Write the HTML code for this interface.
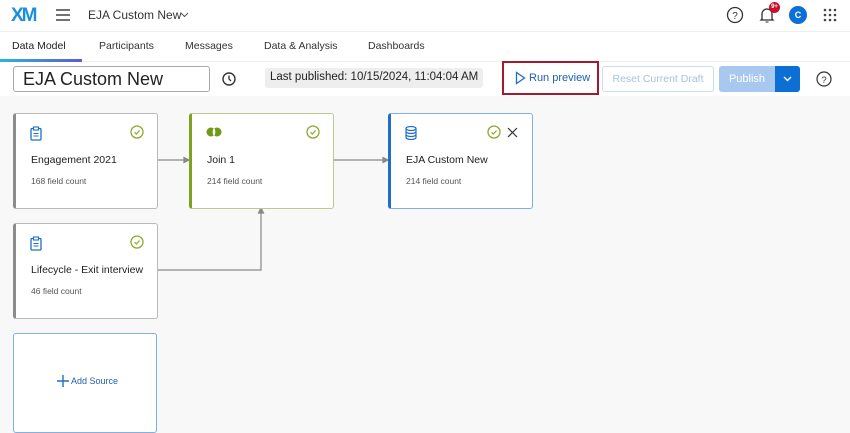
<!DOCTYPE html><html><head><style>
*{box-sizing:border-box;margin:0;padding:0}
body{width:850px;height:427px;overflow:hidden;font-family:"Liberation Sans",sans-serif;background:#f8f8f8;position:relative;color:#222}
.a{position:absolute;white-space:nowrap}
.hdr{left:0;top:0;width:850px;height:96px;background:#fff}
.card{position:absolute;width:145px;height:96px;background:#fff;border:1px solid #b9b9b9;border-left:3px solid #8c8c8c;border-radius:3px}
.card .t{position:absolute;left:15px;top:40px;font-size:10.5px;color:#222;white-space:nowrap}
.card .c{position:absolute;left:15px;top:62px;font-size:8.5px;color:#555}
.card .ic{position:absolute;left:14px;top:12px}
.card .ok{position:absolute;right:13px;top:11px}
</style></head><body>
<div class="a hdr"></div>
<div class="a" style="left:0;top:31px;width:850px;height:1px;background:#eee"></div>
<div class="a" style="left:0;top:61px;width:850px;height:1px;background:#eee"></div>
<div class="a" style="left:11px;top:5px;font-size:19px;font-weight:bold;letter-spacing:-2px;color:#1a8fe0">XM</div>
<svg class="a" style="left:55px;top:8px" width="16" height="14"><path d="M1 2h14M1 7h14M1 12h14" stroke="#444" stroke-width="1.6"/></svg>
<div class="a" style="left:88px;top:8px;font-size:12px;color:#333">EJA Custom New</div>
<svg class="a" style="left:180px;top:12px" width="9" height="6"><path d="M1 1l3.5 3.5L8 1" stroke="#555" fill="none"/></svg>
<svg class="a" style="left:726px;top:6px" width="18" height="18"><circle cx="9" cy="9" r="7.5" stroke="#333" stroke-width="1.3" fill="none"/><text x="9" y="13" font-size="10" text-anchor="middle" fill="#333" font-family="Liberation Sans">?</text></svg>
<svg class="a" style="left:758px;top:6px" width="18" height="18"><path d="M4 13V8a5 5 0 0110 0v5l1 1H3z" stroke="#333" stroke-width="1.3" fill="none"/><path d="M7.5 16h3" stroke="#333"/></svg>
<div class="a" style="left:769px;top:2px;width:11px;height:11px;border-radius:50%;background:#c8102e;color:#fff;font-size:6px;text-align:center;line-height:11px;font-weight:bold">9+</div>
<div class="a" style="left:789px;top:6px;width:18px;height:18px;border-radius:50%;background:#0b6fd4;color:#fff;font-size:9px;text-align:center;line-height:18px;font-weight:bold">C</div>
<svg class="a" style="left:823px;top:8px" width="14" height="14" fill="#444"><circle cx="2" cy="2" r="1.3"/><circle cx="7" cy="2" r="1.3"/><circle cx="12" cy="2" r="1.3"/><circle cx="2" cy="7" r="1.3"/><circle cx="7" cy="7" r="1.3"/><circle cx="12" cy="7" r="1.3"/><circle cx="2" cy="12" r="1.3"/><circle cx="7" cy="12" r="1.3"/><circle cx="12" cy="12" r="1.3"/></svg>
<div class="a" style="top:40px;left:12px;font-size:10.5px;color:#222">Data Model</div>
<div class="a" style="top:40px;left:99px;font-size:10.5px;color:#333">Participants</div>
<div class="a" style="top:40px;left:185px;font-size:10.5px;color:#333">Messages</div>
<div class="a" style="top:40px;left:264px;font-size:10.5px;color:#333">Data &amp; Analysis</div>
<div class="a" style="top:40px;left:368px;font-size:10.5px;color:#333">Dashboards</div>
<div class="a" style="left:0;top:59px;width:82px;height:3px;background:linear-gradient(90deg,#2bb5d8,#5f5ad8)"></div>
<div class="a" style="left:13px;top:66px;width:197px;height:26px;border:1px solid #aaa;border-radius:3px;background:#fff;font-size:18px;padding:2px 9px;color:#222">EJA Custom New</div>
<svg class="a" style="left:221px;top:71px" width="16" height="16"><circle cx="8" cy="8" r="6" stroke="#333" stroke-width="1.4" fill="none"/><path d="M8 4.5V8l2 2" stroke="#333" stroke-width="1.3" fill="none"/></svg>
<div class="a" style="left:265px;top:68px;width:218px;height:20px;background:#eee;border-radius:3px;font-size:11.5px;padding:3px 5px;color:#222;overflow:hidden">Last published: 10/15/2024, 11:04:04 AM</div>
<div class="a" style="left:502px;top:61px;width:97px;height:34px;border:2px solid #a8182c"></div>
<svg class="a" style="left:515px;top:71px" width="11" height="14"><path d="M1.5 1.5v11l8-5.5z" stroke="#1f6fc9" stroke-width="1.3" fill="none"/></svg>
<div class="a" style="left:529px;top:72px;font-size:11px;color:#1f5fb0">Run preview</div>
<div class="a" style="left:602px;top:66px;width:112px;height:26px;border:1px solid #c8dcf2;border-radius:3px;font-size:10.5px;color:#a9c2df;text-align:center;line-height:24px;background:#fff">Reset Current Draft</div>
<div class="a" style="left:719px;top:66px;width:56px;height:26px;background:#a9c8ef;border-radius:3px 0 0 3px;font-size:11px;color:#fff;text-align:center;line-height:26px">Publish</div>
<div class="a" style="left:775px;top:66px;width:25px;height:26px;background:#0b6fd4;border-radius:0 3px 3px 0"></div>
<svg class="a" style="left:783px;top:76px" width="9" height="6"><path d="M1 1l3.5 3.5L8 1" stroke="#fff" stroke-width="1.4" fill="none"/></svg>
<svg class="a" style="left:816px;top:71px" width="16" height="16"><circle cx="8" cy="8" r="7" stroke="#333" stroke-width="1.2" fill="none"/><text x="8" y="12" font-size="9.5" text-anchor="middle" fill="#333" font-family="Liberation Sans">?</text></svg>

<svg class="a" style="left:0;top:100px" width="560" height="200"><g stroke="#888" stroke-width="1.2" fill="#888"><path d="M157 60H185" fill="none"/><path d="M189 60l-5-2.5v5z"/><path d="M333 60H384" fill="none"/><path d="M388 60l-5-2.5v5z"/><path d="M157 170H261V112" fill="none"/><path d="M261 108l-2.5 5h5z"/></g></svg>

<div class="card" style="left:13px;top:113px"><svg class="ic" width="12" height="15"><rect x="1" y="2.5" width="10" height="11.5" rx="1" stroke="#1f6fc9" stroke-width="1.3" fill="none"/><rect x="3.5" y="1" width="5" height="3" fill="#fff" stroke="#1f6fc9" stroke-width="1.1"/><path d="M3.5 7.5h5M3.5 10h5" stroke="#1f6fc9"/></svg><svg class="ok" width="14" height="14"><circle cx="7" cy="7" r="6" stroke="#8aaa2d" stroke-width="1.3" fill="none"/><path d="M4.5 7.2l1.8 1.8 3.3-3.5" stroke="#8aaa2d" stroke-width="1.2" fill="none"/></svg><div class="t">Engagement 2021</div><div class="c">168 field count</div></div>
<div class="card" style="left:189px;top:113px;border-color:#b9cc8a;border-left-color:#7fa11f"><svg class="ic" width="16" height="12"><ellipse cx="5" cy="6" rx="4.5" ry="4.5" fill="#6f9a14"/><ellipse cx="11" cy="6" rx="4.5" ry="4.5" fill="#6f9a14"/><ellipse cx="8" cy="6" rx="1.3" ry="3.5" fill="#fff"/></svg><svg class="ok" width="14" height="14"><circle cx="7" cy="7" r="6" stroke="#8aaa2d" stroke-width="1.3" fill="none"/><path d="M4.5 7.2l1.8 1.8 3.3-3.5" stroke="#8aaa2d" stroke-width="1.2" fill="none"/></svg><div class="t">Join 1</div><div class="c">214 field count</div></div>
<div class="card" style="left:388px;top:113px;border-color:#7fb0e6;border-left-color:#1f6fc9"><svg class="ic" width="12" height="14"><ellipse cx="6" cy="2.5" rx="5" ry="2" stroke="#1f6fc9" stroke-width="1.2" fill="none"/><path d="M1 2.5v9c0 1.1 2.2 2 5 2s5-.9 5-2v-9M1 5.5c0 1.1 2.2 2 5 2s5-.9 5-2M1 8.5c0 1.1 2.2 2 5 2s5-.9 5-2" stroke="#1f6fc9" stroke-width="1.2" fill="none"/></svg><svg class="ok" style="right:31px" width="14" height="14"><circle cx="7" cy="7" r="6" stroke="#8aaa2d" stroke-width="1.3" fill="none"/><path d="M4.5 7.2l1.8 1.8 3.3-3.5" stroke="#8aaa2d" stroke-width="1.2" fill="none"/></svg><svg class="a" style="right:14px;top:13px" width="11" height="11"><path d="M1 1l9 9M10 1l-9 9" stroke="#333" stroke-width="1.2"/></svg><div class="t">EJA Custom New</div><div class="c">214 field count</div></div>
<div class="card" style="left:13px;top:223px"><svg class="ic" width="12" height="15"><rect x="1" y="2.5" width="10" height="11.5" rx="1" stroke="#1f6fc9" stroke-width="1.3" fill="none"/><rect x="3.5" y="1" width="5" height="3" fill="#fff" stroke="#1f6fc9" stroke-width="1.1"/><path d="M3.5 7.5h5M3.5 10h5" stroke="#1f6fc9"/></svg><svg class="ok" width="14" height="14"><circle cx="7" cy="7" r="6" stroke="#8aaa2d" stroke-width="1.3" fill="none"/><path d="M4.5 7.2l1.8 1.8 3.3-3.5" stroke="#8aaa2d" stroke-width="1.2" fill="none"/></svg><div class="t">Lifecycle - Exit interview</div><div class="c">46 field count</div></div>
<div class="a" style="left:13px;top:333px;width:144px;height:100px;background:#fff;border:1px solid #7fb0e6;border-radius:3px"></div>
<svg class="a" style="left:57px;top:375px" width="12" height="12"><path d="M6 0v12M0 6h12" stroke="#1f6fc9" stroke-width="1.4"/></svg>
<div class="a" style="left:71px;top:376px;font-size:9px;color:#1f5fb0">Add Source</div>
</body></html>
